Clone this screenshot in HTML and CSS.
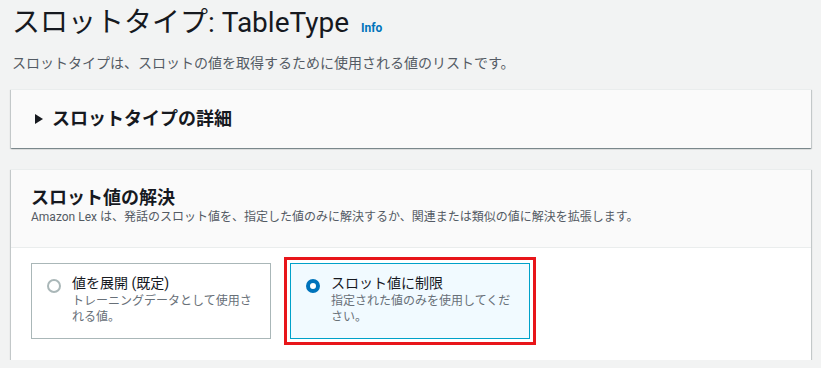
FILE: index.html
```html
<!DOCTYPE html>
<html lang="ja">
<head>
    <title>スロットタイプ: TableType</title>
    <link rel="stylesheet" href="styles.css">
</head>
<body>

<!-- Page header -->
<div class="page-head">
    <h1>スロットタイプ: TableType <a class="info-link" href="#">Info</a></h1>
    <p class="page-desc">スロットタイプは、スロットの値を取得するために使用される値のリストです。</p>
</div>

<!-- Collapsed details section -->
<div class="container collapsed">
    <h2 class="expander"><span class="caret"></span>スロットタイプの詳細</h2>
</div>

<!-- Slot value resolution -->
<div class="container">
    <div class="container-header">
        <h2>スロット値の解決</h2>
        <p class="header-desc">Amazon Lex は、発話のスロット値を、指定した値のみに解決するか、関連または類似の値に解決を拡張します。</p>
    </div>
    <div class="container-body">
        <div class="tiles">
            <label class="tile">
                <span class="radio"></span>
                <span class="tile-text">
                    <span class="tile-title">値を展開 (既定)</span>
                    <span class="tile-desc">トレーニングデータとして使用される値。</span>
                </span>
            </label>
            <label class="tile selected">
                <span class="radio"></span>
                <span class="tile-text">
                    <span class="tile-title">スロット値に制限</span>
                    <span class="tile-desc">指定された値のみを使用してください。</span>
                </span>
            </label>
        </div>
    </div>
</div>

</body>
</html>
```

FILE: styles.css
```css
/* Reset */
* {
    margin: 0;
    padding: 0;
    box-sizing: border-box;
}

body {
    background: #f2f3f3;
    color: #16191f;
    font-family: Roboto, "Noto Sans CJK JP", sans-serif;
    padding: 5px 10px 0 11px;
}

/* Page header */
.page-head h1 {
    font-size: 28px;
    font-weight: 400;
    line-height: 36px;
    padding-left: 1px;
}

.info-link {
    font-size: 12px;
    font-weight: 700;
    color: #0073bb;
    text-decoration: none;
    margin-left: 5px;
}

.page-desc {
    margin-top: 7px;
    font-size: 14px;
    line-height: 20px;
    color: #545b64;
    padding-left: 1px;
}

/* Containers */
.container {
    background: #fff;
    border-top: 1px solid #eaeded;
    box-shadow: 0 1px 1px 0 rgba(0, 28, 36, 0.3), 1px 1px 1px 0 rgba(0, 28, 36, 0.15), -1px 1px 1px 0 rgba(0, 28, 36, 0.15);
    margin-top: 16px;
}

.container + .container {
    margin-top: 21px;
}

.container.collapsed {
    background: #fafafa;
    padding: 18px 20px 18px 24px;
}

.expander {
    display: flex;
    align-items: center;
    font-size: 18px;
    font-weight: 700;
    line-height: 22px;
}

.caret {
    width: 0;
    height: 0;
    border-top: 5px solid transparent;
    border-bottom: 5px solid transparent;
    border-left: 8px solid #16191f;
    margin-right: 9px;
}

.container-header {
    background: #fafafa;
    border-bottom: 1px solid #eaeded;
    padding: 17px 20px 22px;
}

.container-header h2 {
    font-size: 18px;
    font-weight: 700;
    line-height: 22px;
}

.header-desc {
    font-size: 12px;
    line-height: 16px;
    color: #545b64;
}

.container-body {
    padding: 15px 20px 21px;
}

/* Radio tiles */
.tiles {
    display: grid;
    grid-template-columns: 240px 240px;
    gap: 19px;
}

.tile {
    display: flex;
    align-items: flex-start;
    gap: 11px;
    height: 76px;
    padding: 14px 15px 0 15px;
    border: 1px solid #aab7b8;
    background: #fff;
}

.tile.selected {
    background: #f1faff;
    border-color: #00a1c9;
    outline: 3px solid #e8161a;
    outline-offset: 3px;
}

.radio {
    flex: none;
    width: 14px;
    height: 14px;
    margin-top: 1px;
    border-radius: 50%;
    border: 2px solid #aab7b8;
    background: #fff;
}

.selected .radio {
    border: 4px solid #0073bb;
}

.tile-text {
    display: flex;
    flex-direction: column;
    margin-top: -5px;
}

.tile-title {
    font-size: 14px;
    line-height: 20px;
}

.tile-desc {
    font-size: 12px;
    line-height: 16px;
    color: #687078;
}
```
